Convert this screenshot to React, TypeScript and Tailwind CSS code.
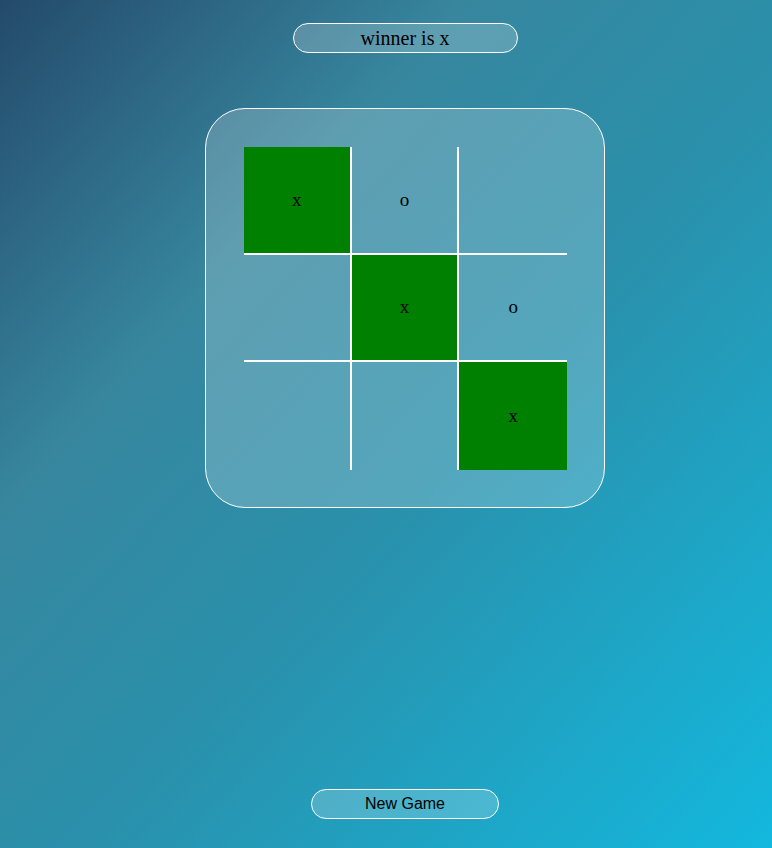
import { useState } from "react";

const serif = { fontFamily: '"Liberation Serif", "Times New Roman", serif' };

export default function App() {
  const [board] = useState<string[]>(["x", "o", "", "", "x", "o", "", "", "x"]);
  const winLine = [0, 4, 8];

  return (
    <div className="min-h-[848px] w-full bg-[linear-gradient(to_bottom_right,#244a6b,#37869e_30%,#2a90ab_55%,#13b8de)] pl-[38px] flex flex-col items-center">
      <div
        className="mt-[23px] w-[225px] h-[30px] rounded-full border border-white bg-white/20 flex items-center justify-center text-[20px] text-black"
        style={serif}
      >
        winner is x
      </div>

      <div className="mt-[55px] w-[400px] h-[400px] rounded-[40px] border border-white bg-white/20 p-[38px]">
        <div className="grid grid-cols-3 grid-rows-3 w-[323px] h-[323px]" style={serif}>
          {board.map((cell, i) => {
            const col = i % 3;
            const row = Math.floor(i / 3);
            return (
              <div
                key={i}
                className={[
                  "flex items-center justify-center text-[19px] text-black border-white",
                  col < 2 ? "border-r-2" : "",
                  row < 2 ? "border-b-2" : "",
                  winLine.includes(i) ? "bg-[#008000]" : "",
                ].join(" ")}
              >
                {cell}
              </div>
            );
          })}
        </div>
      </div>

      <button
        type="button"
        className="mt-[281px] w-[188px] h-[30px] rounded-full border border-white bg-white/20 text-[16px] text-black"
        style={{ fontFamily: '"Liberation Sans", Arial, sans-serif' }}
      >
        New Game
      </button>
    </div>
  );
}
